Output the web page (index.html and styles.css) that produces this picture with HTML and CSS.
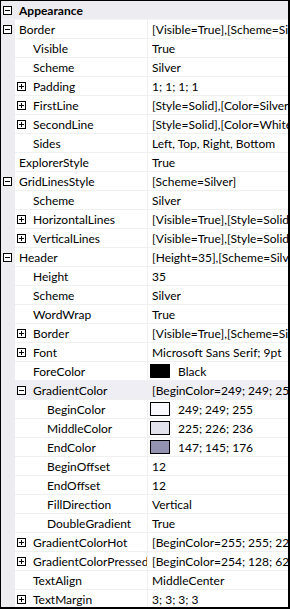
FILE: index.html
```html
<html>
    <head>
        <title>Property grid</title>
        <link rel="stylesheet" href="styles.css">
    </head>
    <body>
        <div class="grid">
            <div class="row cat">
                <div class="gutter"><svg class="tog" width="9" height="9"><rect x="0.5" y="0.5" width="8" height="8" fill="#fff" stroke="#000"/><path d="M2 4.5h5" stroke="#000"/></svg></div>
                <div class="name">Appearance</div>
            </div>
            <div class="row">
                <div class="gutter"><svg class="tog" width="9" height="9"><rect x="0.5" y="0.5" width="8" height="8" fill="#fff" stroke="#000"/><path d="M2 4.5h5" stroke="#000"/></svg></div>
                <div class="name">Border</div>
                <div class="value">[Visible=True],[Scheme=Silver]</div>
            </div>
            <div class="row">
                <div class="gutter"></div>
                <div class="name l1">Visible</div>
                <div class="value">True</div>
            </div>
            <div class="row">
                <div class="gutter"></div>
                <div class="name l1">Scheme</div>
                <div class="value">Silver</div>
            </div>
            <div class="row">
                <div class="gutter"></div>
                <div class="name l1t"><svg class="tog" width="9" height="9"><rect x="0.5" y="0.5" width="8" height="8" fill="#fff" stroke="#000"/><path d="M2 4.5h5M4.5 2v5" stroke="#000"/></svg>Padding</div>
                <div class="value">1; 1; 1; 1</div>
            </div>
            <div class="row">
                <div class="gutter"></div>
                <div class="name l1t"><svg class="tog" width="9" height="9"><rect x="0.5" y="0.5" width="8" height="8" fill="#fff" stroke="#000"/><path d="M2 4.5h5M4.5 2v5" stroke="#000"/></svg>FirstLine</div>
                <div class="value">[Style=Solid],[Color=Silver]</div>
            </div>
            <div class="row">
                <div class="gutter"></div>
                <div class="name l1t"><svg class="tog" width="9" height="9"><rect x="0.5" y="0.5" width="8" height="8" fill="#fff" stroke="#000"/><path d="M2 4.5h5M4.5 2v5" stroke="#000"/></svg>SecondLine</div>
                <div class="value">[Style=Solid],[Color=White]</div>
            </div>
            <div class="row">
                <div class="gutter"></div>
                <div class="name l1">Sides</div>
                <div class="value">Left, Top, Right, Bottom</div>
            </div>
            <div class="row">
                <div class="gutter"></div>
                <div class="name">ExplorerStyle</div>
                <div class="value">True</div>
            </div>
            <div class="row">
                <div class="gutter"><svg class="tog" width="9" height="9"><rect x="0.5" y="0.5" width="8" height="8" fill="#fff" stroke="#000"/><path d="M2 4.5h5" stroke="#000"/></svg></div>
                <div class="name">GridLinesStyle</div>
                <div class="value">[Scheme=Silver]</div>
            </div>
            <div class="row">
                <div class="gutter"></div>
                <div class="name l1">Scheme</div>
                <div class="value">Silver</div>
            </div>
            <div class="row">
                <div class="gutter"></div>
                <div class="name l1t"><svg class="tog" width="9" height="9"><rect x="0.5" y="0.5" width="8" height="8" fill="#fff" stroke="#000"/><path d="M2 4.5h5M4.5 2v5" stroke="#000"/></svg>HorizontalLines</div>
                <div class="value">[Visible=True],[Style=Solid]</div>
            </div>
            <div class="row">
                <div class="gutter"></div>
                <div class="name l1t"><svg class="tog" width="9" height="9"><rect x="0.5" y="0.5" width="8" height="8" fill="#fff" stroke="#000"/><path d="M2 4.5h5M4.5 2v5" stroke="#000"/></svg>VerticalLines</div>
                <div class="value">[Visible=True],[Style=Solid]</div>
            </div>
            <div class="row">
                <div class="gutter"><svg class="tog" width="9" height="9"><rect x="0.5" y="0.5" width="8" height="8" fill="#fff" stroke="#000"/><path d="M2 4.5h5" stroke="#000"/></svg></div>
                <div class="name">Header</div>
                <div class="value">[Height=35],[Scheme=Silver]</div>
            </div>
            <div class="row">
                <div class="gutter"></div>
                <div class="name l1">Height</div>
                <div class="value">35</div>
            </div>
            <div class="row">
                <div class="gutter"></div>
                <div class="name l1">Scheme</div>
                <div class="value">Silver</div>
            </div>
            <div class="row">
                <div class="gutter"></div>
                <div class="name l1">WordWrap</div>
                <div class="value">True</div>
            </div>
            <div class="row">
                <div class="gutter"></div>
                <div class="name l1t"><svg class="tog" width="9" height="9"><rect x="0.5" y="0.5" width="8" height="8" fill="#fff" stroke="#000"/><path d="M2 4.5h5M4.5 2v5" stroke="#000"/></svg>Border</div>
                <div class="value">[Visible=True],[Scheme=Silver]</div>
            </div>
            <div class="row">
                <div class="gutter"></div>
                <div class="name l1t"><svg class="tog" width="9" height="9"><rect x="0.5" y="0.5" width="8" height="8" fill="#fff" stroke="#000"/><path d="M2 4.5h5M4.5 2v5" stroke="#000"/></svg>Font</div>
                <div class="value">Microsoft Sans Serif; 9pt</div>
            </div>
            <div class="row">
                <div class="gutter"></div>
                <div class="name l1">ForeColor</div>
                <div class="value"><span class="swatch" style="background:#000"></span>Black</div>
            </div>
            <div class="row hover">
                <div class="gutter"></div>
                <div class="name l1t"><svg class="tog" width="9" height="9"><rect x="0.5" y="0.5" width="8" height="8" fill="#fff" stroke="#000"/><path d="M2 4.5h5" stroke="#000"/></svg>GradientColor</div>
                <div class="value">[BeginColor=249; 249; 255],[MiddleColor=225; 226; 236]</div>
            </div>
            <div class="row">
                <div class="gutter"></div>
                <div class="name l2">BeginColor</div>
                <div class="value"><span class="swatch" style="background:rgb(249,249,255)"></span>249; 249; 255</div>
            </div>
            <div class="row">
                <div class="gutter"></div>
                <div class="name l2">MiddleColor</div>
                <div class="value"><span class="swatch" style="background:rgb(225,226,236)"></span>225; 226; 236</div>
            </div>
            <div class="row">
                <div class="gutter"></div>
                <div class="name l2">EndColor</div>
                <div class="value"><span class="swatch" style="background:rgb(147,145,176)"></span>147; 145; 176</div>
            </div>
            <div class="row">
                <div class="gutter"></div>
                <div class="name l2">BeginOffset</div>
                <div class="value">12</div>
            </div>
            <div class="row">
                <div class="gutter"></div>
                <div class="name l2">EndOffset</div>
                <div class="value">12</div>
            </div>
            <div class="row">
                <div class="gutter"></div>
                <div class="name l2">FillDirection</div>
                <div class="value">Vertical</div>
            </div>
            <div class="row">
                <div class="gutter"></div>
                <div class="name l2">DoubleGradient</div>
                <div class="value">True</div>
            </div>
            <div class="row">
                <div class="gutter"></div>
                <div class="name l1t"><svg class="tog" width="9" height="9"><rect x="0.5" y="0.5" width="8" height="8" fill="#fff" stroke="#000"/><path d="M2 4.5h5M4.5 2v5" stroke="#000"/></svg>GradientColorHot</div>
                <div class="value">[BeginColor=255; 255; 222],[MiddleColor=255; 225; 172]</div>
            </div>
            <div class="row">
                <div class="gutter"></div>
                <div class="name l1t"><svg class="tog" width="9" height="9"><rect x="0.5" y="0.5" width="8" height="8" fill="#fff" stroke="#000"/><path d="M2 4.5h5M4.5 2v5" stroke="#000"/></svg>GradientColorPressed</div>
                <div class="value">[BeginColor=254; 128; 62],[MiddleColor=255; 177; 109]</div>
            </div>
            <div class="row">
                <div class="gutter"></div>
                <div class="name l1">TextAlign</div>
                <div class="value">MiddleCenter</div>
            </div>
            <div class="row">
                <div class="gutter"></div>
                <div class="name l1t"><svg class="tog" width="9" height="9"><rect x="0.5" y="0.5" width="8" height="8" fill="#fff" stroke="#000"/><path d="M2 4.5h5M4.5 2v5" stroke="#000"/></svg>TextMargin</div>
                <div class="value">3; 3; 3; 3</div>
            </div>
        </div>
    </body>
</html>
```

FILE: styles.css
```css
body
{
    margin: 0;
    padding: 0;
    background: #fff;
}
.grid
{
    width: 290px;
    height: 609px;
    box-sizing: border-box;
    border: 1px solid #000;
    border-right-width: 2px;
    border-bottom-width: 2px;
    overflow: hidden;
    font-family: Lato, "Liberation Sans", sans-serif;
    font-size: 12px;
    color: #000;
}
.row
{
    display: flex;
    height: 19px;
}
.gutter
{
    width: 14px;
    flex: none;
    background: #ededf1;
    display: flex;
    align-items: center;
    padding-left: 2px;
    box-sizing: border-box;
}
.tog
{
    display: block;
    flex: none;
}
.name
{
    width: 133px;
    flex: none;
    box-sizing: border-box;
    height: 19px;
    border-right: 1px solid #f0f0f0;
    border-bottom: 1px solid #f0f0f0;
    padding-left: 4px;
    display: flex;
    align-items: center;
    white-space: nowrap;
    overflow: hidden;
}
.name.l1
{
    padding-left: 18px;
}
.name.l1t
{
    padding-left: 2px;
}
.name.l1t .tog
{
    margin-right: 7px;
}
.name.l2
{
    padding-left: 32px;
}
.value
{
    flex: 1;
    min-width: 0;
    height: 19px;
    box-sizing: border-box;
    border-bottom: 1px solid #f0f0f0;
    padding-left: 4px;
    display: flex;
    align-items: center;
    white-space: nowrap;
    overflow: hidden;
}
.cat
{
    background: #ededf1;
    border-bottom: 1px solid #f4f4f6;
    box-sizing: border-box;
}
.cat .name
{
    width: auto;
    flex: 1;
    border: none;
    font-weight: bold;
    height: 18px;
}
.hover .name,
.hover .value
{
    background: #efeef4;
}
.swatch
{
    width: 20px;
    height: 14px;
    box-sizing: border-box;
    border: 1px solid #000;
    margin-left: -2px;
    margin-right: 8px;
    flex: none;
}
```
